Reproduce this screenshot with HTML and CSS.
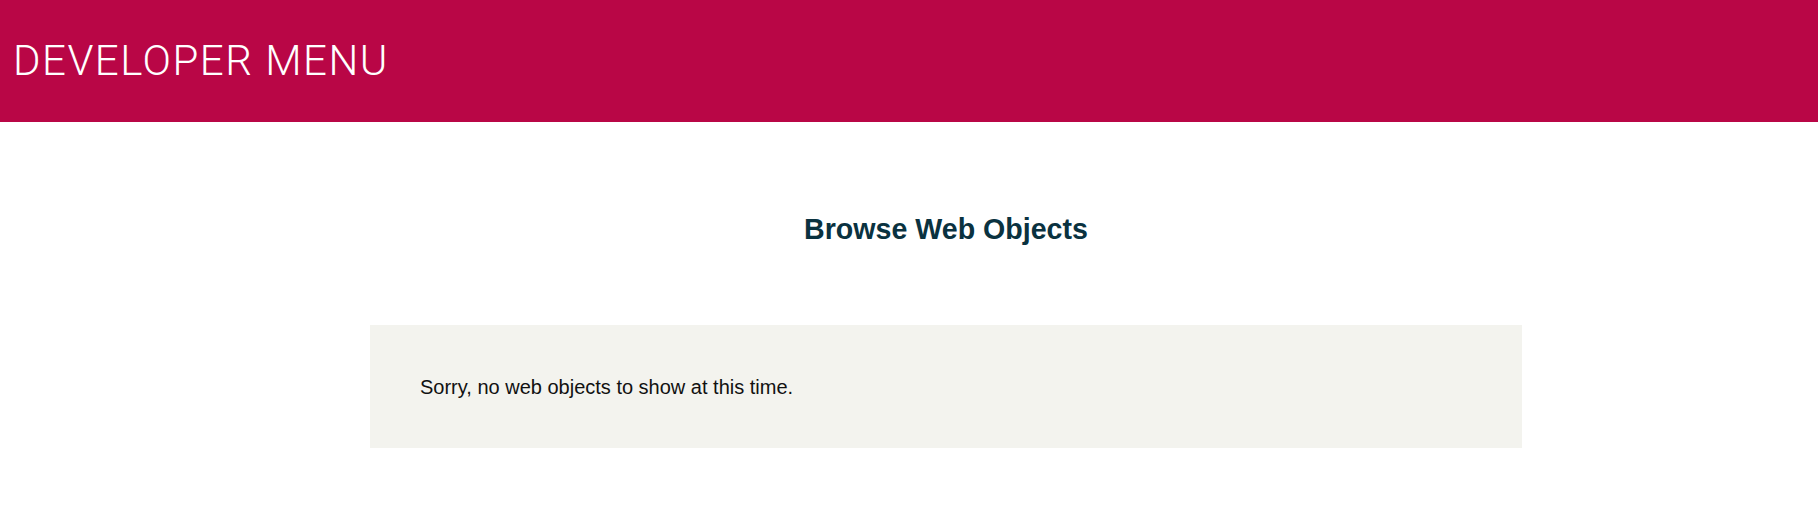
FILE: index.html
```html
<!DOCTYPE html>
<html>
<head>
<meta charset="utf-8">
<link rel="stylesheet" href="styles.css">
</head>
<body>
<header class="topbar">
  <div class="brand">DEVELOPER MENU</div>
</header>
<main class="content">
  <h1 class="title">Browse Web Objects</h1>
  <section class="notice">
    <p class="notice-text">Sorry, no web objects to show at this time.</p>
  </section>
</main>
</body>
</html>
```
FILE: styles.css
```css
html, body {
  margin: 0;
  padding: 0;
  background: #ffffff;
}
body {
  font-family: "Liberation Sans", Arial, sans-serif;
}
.topbar {
  height: 122px;
  background: #b90646;
  display: flex;
  align-items: center;
  padding-left: 13px;
}
.brand {
  font-family: Roboto, "Liberation Sans", sans-serif;
  font-weight: 300;
  font-size: 42px;
  line-height: 1;
  color: #ffffff;
  letter-spacing: 1.5px;
}
.content {
  width: 1152px;
  margin-left: 370px;
}
.title {
  margin: 90px 0 79px;
  font-size: 28.6px;
  line-height: 34px;
  font-weight: 700;
  text-align: center;
  color: #0a3240;
}
.notice {
  background: #f3f3ee;
  height: 123px;
  box-sizing: border-box;
  padding: 51px 50px 0;
}
.notice-text {
  margin: 0;
  font-size: 20px;
  line-height: 23px;
  color: #111111;
}
```
